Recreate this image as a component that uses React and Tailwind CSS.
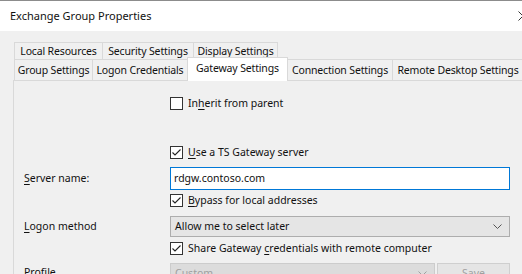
import React from "react";

const tabsTop = [
  { label: "Local Resources", w: "w-[89px]" },
  { label: "Security Settings", w: "w-[92px]" },
  { label: "Display Settings", w: "w-[85px]" },
];

const tabsBottom = [
  { label: "Group Settings", w: "w-[79px]" },
  { label: "Logon Credentials", w: "w-[96px]" },
  { label: "Gateway Settings", w: "w-[101px]", active: true },
  { label: "Connection Settings", w: "w-[106px]" },
  { label: "Remote Desktop Settings", w: "w-[132px]" },
];

function Check({ checked, children }) {
  return (
    <div className="flex items-center gap-[5px] h-[13px]">
      <span className="w-[13px] h-[13px] border border-[#333] bg-white flex items-center justify-center shrink-0">
        {checked && (
          <svg width="11" height="11" viewBox="0 0 11 11">
            <path d="M1.5 5.5 L4 8 L9.5 2.5" fill="none" stroke="#222" strokeWidth="1.1" />
          </svg>
        )}
      </span>
      <span className="leading-none whitespace-nowrap">{children}</span>
    </div>
  );
}

function Chevron({ color = "#555" }) {
  return (
    <svg width="9" height="6" viewBox="0 0 9 6">
      <path d="M0.5 0.5 L4.5 4.5 L8.5 0.5" fill="none" stroke={color} strokeWidth="1" />
    </svg>
  );
}

export default function App() {
  return (
    <div className="w-[522px] h-[274px] overflow-hidden bg-[#f0f0f0] text-[10.5px] text-[#111] font-['Noto_Sans',sans-serif] flex flex-col">
      {/* Title bar */}
      <div className="h-[31px] shrink-0 bg-white border-t border-[#8c8c8c] flex items-center justify-between pl-[10px]">
        <span className="text-[11px]">Exchange Group Properties</span>
        <svg width="10" height="10" viewBox="0 0 10 10" className="shrink-0 mr-[-6px]">
          <path d="M0.5 0.5 L9.5 9.5 M9.5 0.5 L0.5 9.5" stroke="#333" strokeWidth="1" />
        </svg>
      </div>

      {/* Body */}
      <div className="flex-1 flex flex-col pt-[11px] pl-[14px] tracking-[-0.15px]">
        <div className="flex h-[17px]">
          {tabsTop.map((t) => (
            <div
              key={t.label}
              className={`${t.w} -ml-px first:ml-0 shrink-0 border border-b-0 border-[#d9d9d9] flex items-center justify-center pt-px whitespace-nowrap`}
            >
              {t.label}
            </div>
          ))}
        </div>
        <div className="flex h-[21px] items-end">
          {tabsBottom.map((t) =>
            t.active ? (
              <div
                key={t.label}
                className={`${t.w} h-[24px] -mb-px -ml-px shrink-0 bg-white border border-b-0 border-[#d9d9d9] flex items-start pt-[3px] justify-center whitespace-nowrap z-10`}
              >
                {t.label}
              </div>
            ) : (
              <div
                key={t.label}
                className={`${t.w} h-[21px] -ml-px first:ml-0 shrink-0 border border-b-0 border-[#d9d9d9] flex items-center justify-center pt-px whitespace-nowrap`}
              >
                {t.label}
              </div>
            )
          )}
        </div>

        {/* Tab page */}
        <div className="flex-1 -ml-px bg-[#f0f0f0] border-l border-t border-[#d9d9d9] pl-[10px] pt-[16px] tracking-normal">
          <div className="grid grid-cols-[146px_340px] items-center">
            <div />
            <Check>
              In<u className="underline-offset-2">h</u>erit from parent
            </Check>

            <div className="h-[36px] col-span-2" />

            <div />
            <Check checked>
              <u className="underline-offset-2">U</u>se a TS Gateway server
            </Check>

            <div className="h-[8px] col-span-2" />

            <div>
              <u className="underline-offset-2">S</u>erver name:
            </div>
            <div className="h-[23px] bg-white border border-[#0078d7] flex items-center pl-[3px]">
              rdgw.contoso.com
            </div>

            <div className="h-[4px] col-span-2" />

            <div />
            <Check checked>
              <u className="underline-offset-2">B</u>ypass for local addresses
            </Check>

            <div className="h-[9px] col-span-2" />

            <div>
              <u className="underline-offset-2">L</u>ogon method
            </div>
            <div className="h-[21px] bg-[#e5e5e5] border border-[#adadad] flex items-center justify-between pl-[4px] pr-[7px]">
              <span>Allow me to select later</span>
              <Chevron />
            </div>

            <div className="h-[5px] col-span-2" />

            <div />
            <Check checked>
              Share Gateway <u className="underline-offset-2">c</u>redentials with remote computer
            </Check>

            <div className="h-[8px] col-span-2" />

            <div className="self-start pt-[2px]">Profile</div>
            <div className="flex gap-[2px]">
              <div className="w-[265px] h-[22px] bg-[#dcdcdc] border border-[#cccccc] flex items-center justify-between pl-[4px] pr-[7px] text-[#a0a0a0]">
                <span>Custom</span>
                <Chevron color="#a0a0a0" />
              </div>
              <div className="flex-1 h-[22px] bg-[#e5e5e5] border border-[#cfcfcf] flex items-center justify-center text-[#a0a0a0]">
                Save
              </div>
            </div>
          </div>
        </div>
      </div>
    </div>
  );
}
